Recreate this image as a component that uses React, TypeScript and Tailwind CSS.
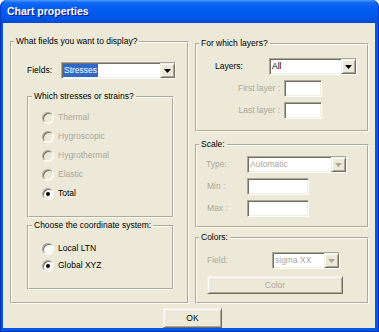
import React from "react";

const sunken =
  "border border-t-[#ACA899] border-l-[#ACA899] border-r-white border-b-white shadow-[inset_1px_1px_0_#716F64,inset_-1px_-1px_0_#F1EFE2]";
const raised =
  "border border-t-[#F1EFE2] border-l-[#F1EFE2] border-r-[#716F64] border-b-[#716F64] shadow-[inset_1px_1px_0_#ffffff,inset_-1px_-1px_0_#ACA899]";
const group =
  "border-2 [--tw-border-style:groove] [border-style:groove] border-[#FFFDF0]";
const dis = "text-[#ACA899]";

function Combo({
  w,
  text,
  disabled,
  hl,
}: {
  w: string;
  text: string;
  disabled?: boolean;
  hl?: boolean;
}) {
  return (
    <div className={`h-[17px] ${w} flex items-stretch bg-white ${sunken}`}>
      <div className="flex-1 flex items-stretch py-[1px] pl-[1px] overflow-hidden">
        <span
          className={
            hl
              ? "flex items-center bg-[#316AC5] text-white px-[1px]"
              : disabled
              ? "flex items-center text-[#ACA899] px-[1px]"
              : "flex items-center px-[1px]"
          }
        >
          {text}
        </span>
      </div>
      <div className={`w-[15px] flex items-center justify-center bg-[#ECE9D8] ${raised}`}>
        <svg width="7" height="4" viewBox="0 0 7 4">
          <path d="M0 0h7L3.5 4z" fill={disabled ? "#ACA899" : "#000000"} />
        </svg>
      </div>
    </div>
  );
}

function Radio({
  label,
  checked,
  disabled,
  h,
}: {
  label: string;
  checked?: boolean;
  disabled?: boolean;
  h: string;
}) {
  return (
    <div className={`${h} flex items-center`}>
      <div
        className={`w-[12px] h-[12px] rounded-full ${
          disabled ? "bg-[#ECE9D8]" : "bg-white"
        } border border-t-[#ACA899] border-l-[#ACA899] border-r-white border-b-white shadow-[inset_1px_1px_0_#716F64,inset_-1px_-1px_0_#F1EFE2] flex items-center justify-center`}
      >
        {checked && <div className="w-[4px] h-[4px] rounded-full bg-black" />}
      </div>
      <span className={`ml-[4px] ${disabled ? dis : ""}`}>{label}</span>
    </div>
  );
}

function TextBox({ w }: { w: string }) {
  return <div className={`${w} h-[17px] bg-white ${sunken}`} />;
}

export default function App() {
  return (
    <div className="w-[379px] h-[332px] flex flex-col font-['Liberation_Sans',Arial,sans-serif] text-[8.5px] leading-[11px] text-black">
      <div className="h-[23px] shrink-0 rounded-t-[7px] bg-[linear-gradient(to_bottom,#4A9BFF_0%,#1268F5_12%,#005CF0_40%,#0058EA_70%,#0050E0_90%,#0046D0_100%)] flex items-center pl-[7px] shadow-[inset_1px_0_0_#0A3DC8,inset_-1px_0_0_#0A3DC8]">
        <span className="text-white font-bold text-[10.5px] leading-[13px] [text-shadow:1px_1px_0_#0A1883]">
          Chart properties
        </span>
      </div>
      <div className="flex-1 flex flex-col bg-[#0058E8] pl-[3px] pr-[4px] pb-[4px] shadow-[inset_1px_0_0_#0A2EB8,inset_-1px_0_0_#0A2EB8,inset_0_-1px_0_#0A2EB8]">
        <div className="flex-1 bg-[#ECE9D8] flex flex-col">
          <div className="flex gap-[6px] pl-[7px] pt-[13px]">
            {/* Left column */}
            <fieldset className={`${group} w-[179px] h-[268px]`}>
              <legend className="ml-[2px] px-[2px]">What fields you want to display?</legend>
              <div className="flex items-center pt-[15px] pl-[15px]">
                <span className="w-[34px]">Fields:</span>
                <Combo w="w-[115px]" text="Stresses" hl />
              </div>
              <fieldset className={`${group} mt-[12px] ml-[15px] w-[147px] h-[127px]`}>
                <legend className="ml-[3px] px-[2px]">Which stresses or strains?</legend>
                <div className="pt-[6px] pl-[13px] flex flex-col">
                  <Radio h="h-[19px]" label="Thermal" disabled />
                  <Radio h="h-[19px]" label="Hygroscopic" disabled />
                  <Radio h="h-[19px]" label="Hygrothermal" disabled />
                  <Radio h="h-[19px]" label="Elastic" disabled />
                  <Radio h="h-[19px]" label="Total" checked />
                </div>
              </fieldset>
              <fieldset className={`${group} mt-[2px] ml-[15px] w-[147px] h-[70px]`}>
                <legend className="ml-[3px] px-[2px]">Choose the coordinate system:</legend>
                <div className="pt-[9px] pl-[13px] flex flex-col">
                  <Radio h="h-[17px]" label="Local LTN" />
                  <Radio h="h-[17px]" label="Global XYZ" checked />
                </div>
              </fieldset>
            </fieldset>

            {/* Right column */}
            <div className="flex flex-col w-[174px] pt-[2px]">
              <fieldset className={`${group} w-[174px] h-[94px]`}>
                <legend className="ml-[2px] px-[2px]">For which layers?</legend>
                <div className="flex items-center pt-[9px] pl-[18px]">
                  <span className="w-[54px]">Layers:</span>
                  <Combo w="w-[88px]" text="All" />
                </div>
                <div className="flex items-center mt-[5px]">
                  <span className={`w-[83px] text-right ${dis}`}>First layer :</span>
                  <div className="ml-[4px]">
                    <TextBox w="w-[38px]" />
                  </div>
                </div>
                <div className="flex items-center mt-[5px]">
                  <span className={`w-[83px] text-right ${dis}`}>Last layer :</span>
                  <div className="ml-[4px]">
                    <TextBox w="w-[38px]" />
                  </div>
                </div>
              </fieldset>

              <fieldset className={`${group} mt-[7px] w-[174px] h-[89px]`}>
                <legend className="ml-[2px] px-[2px]">Scale:</legend>
                <div className="flex items-center pt-[6px] pl-[9px]">
                  <span className={`w-[41px] ${dis}`}>Type:</span>
                  <Combo w="w-[100px]" text="Automatic" disabled />
                </div>
                <div className="flex items-center mt-[5px] pl-[10px]">
                  <span className={`w-[40px] ${dis}`}>Min :</span>
                  <TextBox w="w-[62px]" />
                </div>
                <div className="flex items-center mt-[5px] pl-[10px]">
                  <span className={`w-[40px] ${dis}`}>Max :</span>
                  <TextBox w="w-[62px]" />
                </div>
              </fieldset>

              <fieldset className={`${group} mt-[4px] w-[174px] h-[72px]`}>
                <legend className="ml-[2px] px-[2px]">Colors:</legend>
                <div className="flex items-center pt-[9px] pl-[10px]">
                  <span className={`w-[65px] ${dis}`}>Field:</span>
                  <Combo w="w-[68px]" text="sigma XX" disabled />
                </div>
                <div className="mt-[7px] pl-[10px]">
                  <div
                    className={`w-[136px] h-[18px] bg-[#ECE9D8] flex items-center justify-center ${raised} ${dis}`}
                  >
                    Color
                  </div>
                </div>
              </fieldset>
            </div>
          </div>
          <div className="flex pl-[160px] pt-[4px]">
            <div className={`w-[59px] h-[20px] bg-[#ECE9D8] flex items-center justify-center ${raised}`}>
              OK
            </div>
          </div>
        </div>
      </div>
    </div>
  );
}
